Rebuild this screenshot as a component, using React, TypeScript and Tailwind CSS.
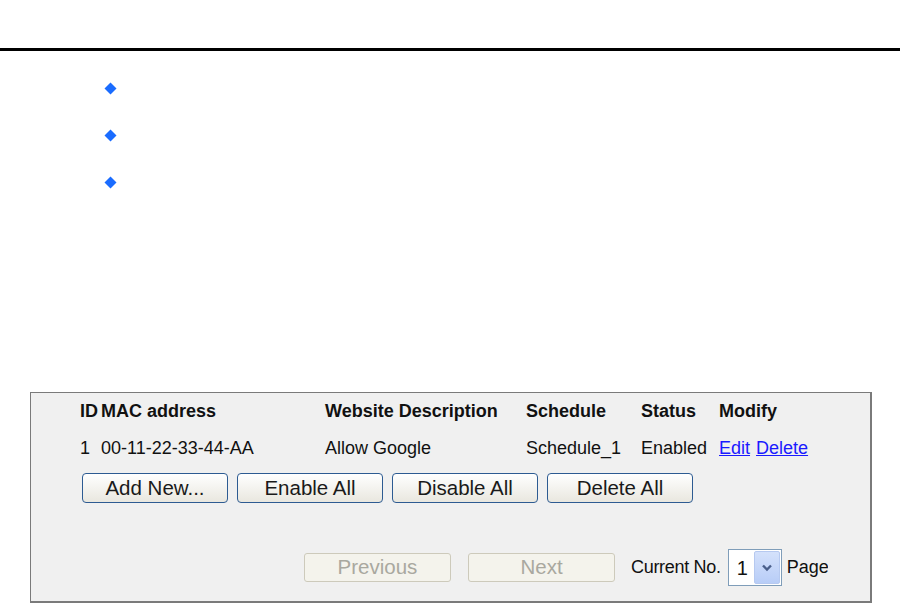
import React from "react";

const Diamond = () => (
  <svg width="13" height="13" viewBox="0 0 13 13">
    <polygon points="6.5,0.5 12.5,6.5 6.5,12.5 0.5,6.5" fill="#1a6cff" />
  </svg>
);

const Btn = ({ label }: { label: string }) => (
  <button className="h-[30px] w-[146px] rounded-[4px] border border-[#2d5b92] bg-linear-to-b from-white to-[#e9e7df] text-[20.5px] leading-none text-[#1a1a1a]">
    {label}
  </button>
);

const DisabledBtn = ({ label }: { label: string }) => (
  <button
    disabled
    className="h-[29px] w-[147px] shrink-0 rounded-[3px] border border-[#cdcabb] bg-[#f4f3ec] text-[20.5px] leading-none text-[#a9a89f]"
  >
    {label}
  </button>
);

export default function App() {
  const head = "text-[18px] font-bold text-[#111]";
  const cell = "text-[18px] text-[#111]";
  return (
    <div className="h-[603px] w-[900px] overflow-hidden bg-white font-['Liberation_Sans',Arial,sans-serif]">
      <div className="mt-[48px] h-[3px] w-full bg-black" />

      <ul className="mt-[14px] pl-[104px]">
        {[0, 1, 2].map((i) => (
          <li key={i} className="flex h-[47px] items-center">
            <Diamond />
          </li>
        ))}
      </ul>

      <div className="ml-[30px] mt-[186px] box-border h-[211px] w-[842px] border border-r-2 border-b-2 border-[#7a7a7a] bg-[#f0f0f0] pl-[49px]">
        <div className="grid grid-cols-[21px_224px_201px_115px_78px_auto] items-center">
          <div className={`h-[37px] flex items-center ${head}`}>ID</div>
          <div className={`h-[37px] flex items-center ${head}`}>MAC address</div>
          <div className={`h-[37px] flex items-center ${head}`}>Website Description</div>
          <div className={`h-[37px] flex items-center ${head}`}>Schedule</div>
          <div className={`h-[37px] flex items-center ${head}`}>Status</div>
          <div className={`h-[37px] flex items-center ${head}`}>Modify</div>

          <div className={`h-[37px] flex items-center ${cell}`}>1</div>
          <div className={`h-[37px] flex items-center ${cell}`}>00-11-22-33-44-AA</div>
          <div className={`h-[37px] flex items-center ${cell}`}>Allow Google</div>
          <div className={`h-[37px] flex items-center ${cell}`}>Schedule_1</div>
          <div className={`h-[37px] flex items-center ${cell}`}>Enabled</div>
          <div className={`h-[37px] flex items-center gap-[6px] ${cell}`}>
            <a href="#" className="text-[#1a1aff] underline">Edit</a>
            <a href="#" className="text-[#1a1aff] underline">Delete</a>
          </div>
        </div>

        <div className="ml-[2px] mt-[6px] flex gap-[9px]">
          <Btn label="Add New..." />
          <Btn label="Enable All" />
          <Btn label="Disable All" />
          <Btn label="Delete All" />
        </div>

        <div className="mt-[46px] flex h-[37px] w-[748px] items-center overflow-hidden whitespace-nowrap pl-[224px]">
          <DisabledBtn label="Previous" />
          <div className="ml-[17px] shrink-0">
            <DisabledBtn label="Next" />
          </div>
          <span className="ml-[16px] shrink-0 text-[18px] tracking-[-0.3px] text-[#111]">Current No.</span>
          <div className="ml-[7px] flex h-[37px] w-[54px] shrink-0 items-center border border-[#7f9db9] bg-white">
            <span className="ml-[8px] w-[17px] text-[20px] text-[#111]">1</span>
            <div className="flex h-[33px] w-[26px] items-center justify-center rounded-[2px] border border-[#b6c9f0] bg-linear-to-b from-[#d4e1fb] to-[#b8cdf7]">
              <svg width="12" height="9" viewBox="0 0 12 9">
                <polyline points="2,2.5 6,6.5 10,2.5" fill="none" stroke="#4a5f8a" strokeWidth="2.4" />
              </svg>
            </div>
          </div>
          <span className="ml-[5px] shrink-0 text-[18px] text-[#111]">Page</span>
        </div>
      </div>
    </div>
  );
}
